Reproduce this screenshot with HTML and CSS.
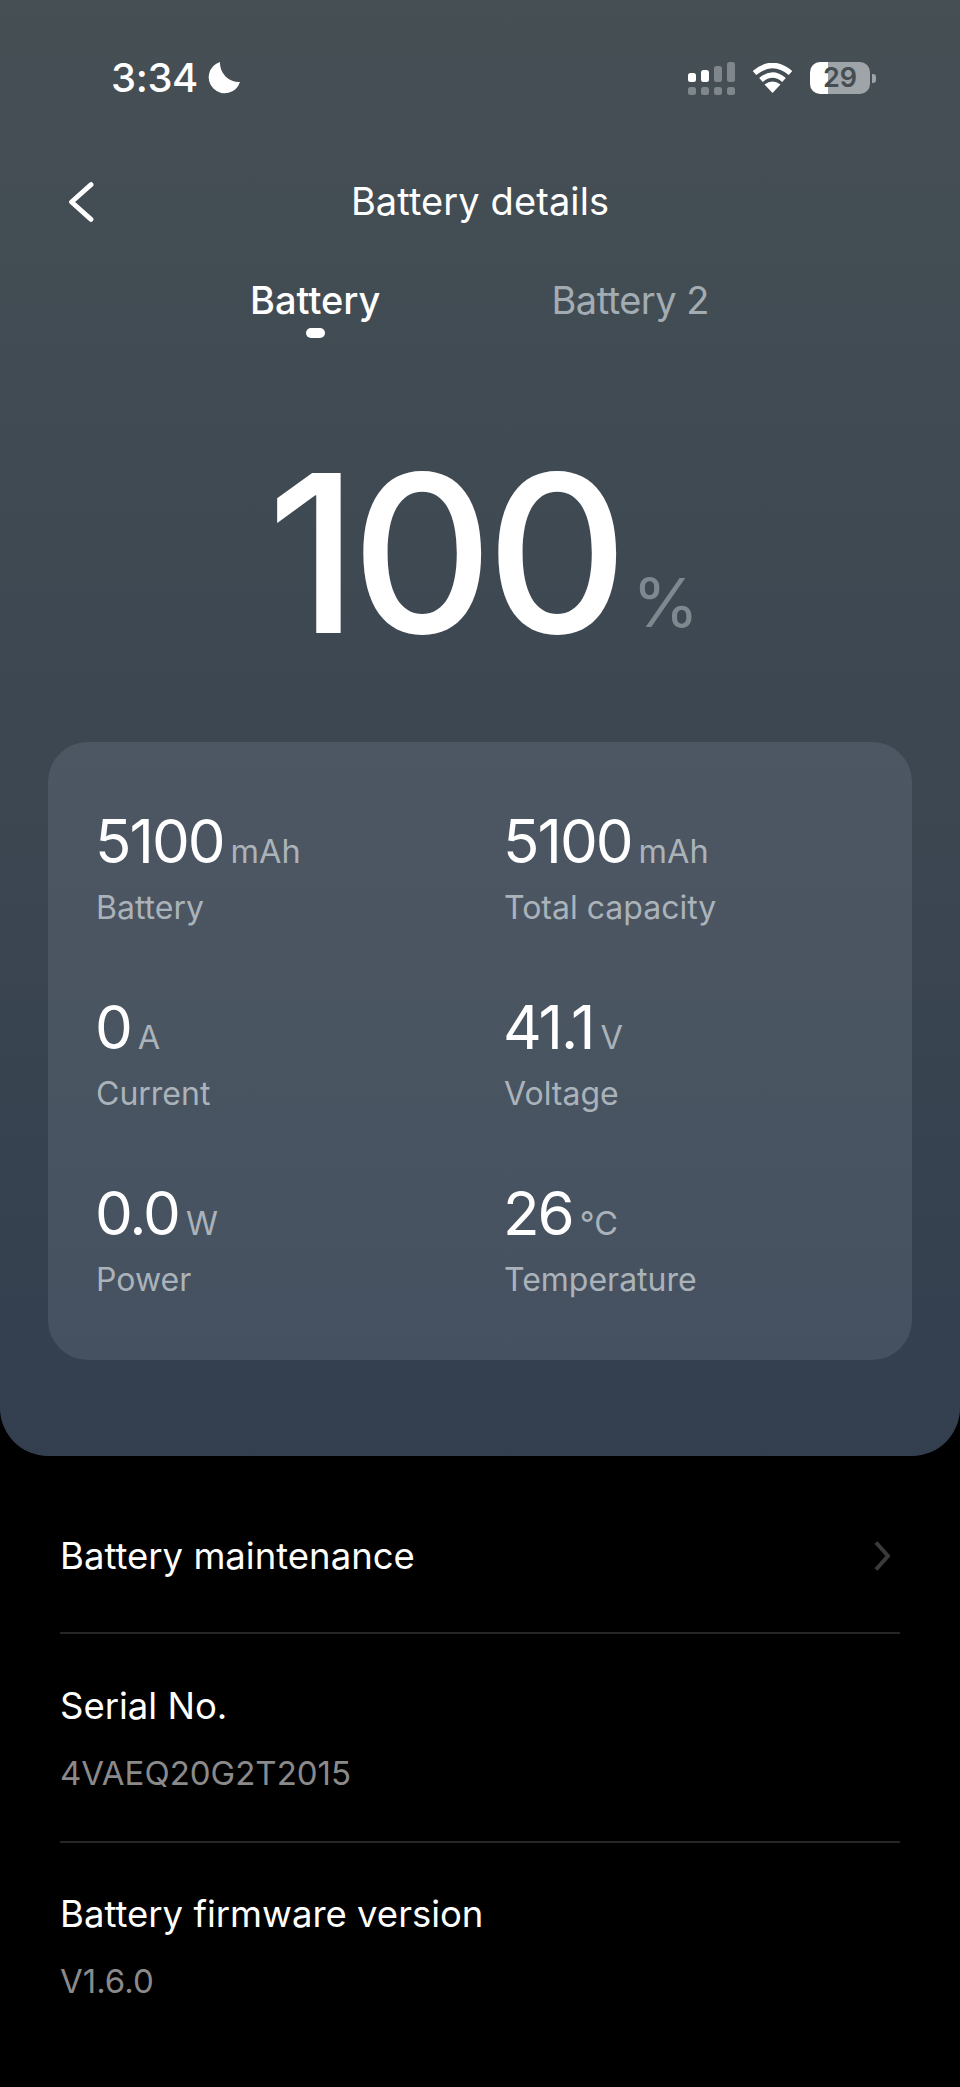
FILE: index.html
```html
<!DOCTYPE html>
<html lang="en">
<head>
  <meta charset="UTF-8">
  <title>Battery details</title>
  <link rel="stylesheet" href="styles.css">
</head>
<body>
  <div class="hero">
    <div class="status">
      <div class="clock">
        <span class="time">3:34</span>
        <svg class="moon" viewBox="0 0 32 32"><path d="M12 0A16 16 0 1 0 32 20A19 19 0 0 1 12 0Z" fill="#fff"/></svg>
      </div>
      <div class="status-icons">
        <div class="signal">
          <div class="signal-col"><i class="bar on h1"></i><i class="dot"></i></div>
          <div class="signal-col"><i class="bar on h2"></i><i class="dot"></i></div>
          <div class="signal-col"><i class="bar h3"></i><i class="dot"></i></div>
          <div class="signal-col"><i class="bar h4"></i><i class="dot"></i></div>
        </div>
        <svg class="wifi" viewBox="0 0 41 30" fill="none" stroke="#fff">
          <path d="M2.5 10Q20.5 -5 38.5 10" stroke-width="5.5"/>
          <path d="M9 17Q20.5 7 32 17" stroke-width="5.5"/>
          <path d="M20.5 30L12.5 21.5Q20.5 15.5 28.5 21.5Z" fill="#fff" stroke="none"/>
        </svg>
        <div class="battery-icon"><span>29</span></div>
        <div class="battery-tip"></div>
      </div>
    </div>

    <div class="nav">
      <svg class="back" viewBox="0 0 24 38" fill="none" stroke="#fff" stroke-width="4.6" stroke-linecap="round" stroke-linejoin="round"><path d="M21.5 2.5L3 19L21.5 35.5"/></svg>
      <div class="title">Battery details</div>
    </div>

    <div class="tabs">
      <div class="tab active">Battery<i class="tab-mark"></i></div>
      <div class="tab">Battery 2</div>
    </div>

    <div class="level">100<span class="pct">%</span></div>

    <div class="card">
      <div class="stat">
        <div class="value">5100<span class="unit">mAh</span></div>
        <div class="label">Battery</div>
      </div>
      <div class="stat">
        <div class="value">5100<span class="unit">mAh</span></div>
        <div class="label">Total capacity</div>
      </div>
      <div class="stat">
        <div class="value">0<span class="unit">A</span></div>
        <div class="label">Current</div>
      </div>
      <div class="stat">
        <div class="value">41.1<span class="unit">V</span></div>
        <div class="label">Voltage</div>
      </div>
      <div class="stat">
        <div class="value">0.0<span class="unit">W</span></div>
        <div class="label">Power</div>
      </div>
      <div class="stat">
        <div class="value">26<span class="unit">°C</span></div>
        <div class="label">Temperature</div>
      </div>
    </div>
  </div>

  <div class="list">
    <div class="row row-link">
      <div class="row-title">Battery maintenance</div>
      <svg class="chevron" viewBox="0 0 16 30" fill="none" stroke="#3a3a3a" stroke-width="4"><path d="M2 1.5L14 15L2 28.5"/></svg>
    </div>
    <div class="row">
      <div class="row-title">Serial No.</div>
      <div class="row-sub">4VAEQ20G2T2015</div>
    </div>
    <div class="row row-last">
      <div class="row-title">Battery firmware version</div>
      <div class="row-sub">V1.6.0</div>
    </div>
  </div>
</body>
</html>
```

FILE: styles.css
```css
* {
  box-sizing: border-box;
}

body {
  margin: 0;
  background: #000;
  color: #fff;
  font-family: Inter, "Liberation Sans", sans-serif;
}

.hero {
  height: 1456px;
  padding-top: 54px;
  background: linear-gradient(180deg, #454f54 0%, #3e4852 45%, #333f4f 100%);
  border-radius: 0 0 48px 48px;
}

.status {
  display: flex;
  justify-content: space-between;
  align-items: center;
  height: 48px;
  padding: 0 84px 0 111px;
}

.clock {
  display: flex;
  align-items: center;
  gap: 10px;
}

.time {
  font-size: 40px;
  line-height: 48px;
  font-weight: 500;
  letter-spacing: -0.4px;
}

.moon {
  width: 32px;
  height: 32px;
}

.status-icons {
  display: flex;
  align-items: center;
}

.signal {
  display: flex;
  align-items: flex-end;
  gap: 5px;
  margin-right: 17px;
}

.signal-col {
  display: flex;
  flex-direction: column;
  gap: 5px;
}

.bar, .dot {
  display: block;
  width: 8px;
  border-radius: 2.5px;
  background: #7f878c;
}

.dot {
  height: 8px;
}

.bar.on {
  background: #fff;
}

.h1 { height: 9px; }
.h2 { height: 12px; }
.h3 { height: 16px; }
.h4 { height: 20px; }

.wifi {
  width: 41px;
  height: 30px;
  margin-right: 17px;
}

.battery-icon {
  width: 60px;
  height: 32px;
  border-radius: 10px;
  background: linear-gradient(90deg, #fff 30%, #9ea4a8 30%);
  color: #434d52;
  font-size: 27px;
  font-weight: 600;
  line-height: 32px;
  text-align: center;
}

.battery-tip {
  width: 4px;
  height: 9px;
  margin-left: 2px;
  border-radius: 0 3px 3px 0;
  background: #9ea4a8;
}

.nav {
  display: flex;
  justify-content: center;
  align-items: center;
  position: relative;
  height: 44px;
  margin-top: 77px;
}

.back {
  position: absolute;
  left: 68px;
  top: 3px;
  width: 26px;
  height: 40px;
}

.title {
  font-size: 38px;
  line-height: 44px;
  letter-spacing: 0.1px;
}

.tabs {
  display: flex;
  gap: 171px;
  margin-top: 57px;
  padding-left: 250px;
}

.tab {
  display: flex;
  flex-direction: column;
  align-items: center;
  font-size: 38px;
  line-height: 40px;
  color: #a3acb2;
  letter-spacing: -0.5px;
}

.tab.active {
  color: #fff;
  font-weight: 500;
  letter-spacing: 0;
}

.tab-mark {
  display: block;
  width: 19px;
  height: 10px;
  margin-top: 8px;
  border-radius: 5px;
  background: #fff;
}

.level {
  height: 200px;
  margin-top: 115px;
  padding-left: 267px;
  font-size: 220px;
  font-weight: 450;
  line-height: 200px;
  letter-spacing: -7px;
  white-space: nowrap;
}

.pct {
  margin-left: 11px;
  font-size: 68px;
  font-weight: 400;
  line-height: 1;
  letter-spacing: 0;
  color: #7e888f;
  vertical-align: 6px;
}

.card {
  display: grid;
  grid-template-columns: 408px 1fr;
  align-content: start;
  row-gap: 69px;
  height: 618px;
  margin: 89px 48px 0;
  padding: 69px 0 0 48px;
  border-radius: 40px;
  background: rgba(225, 240, 255, 0.1);
}

.value {
  height: 60px;
  margin-left: -1px;
  font-size: 60px;
  line-height: 60px;
  letter-spacing: -2px;
}

.unit {
  margin-left: 7px;
  font-size: 32.5px;
  letter-spacing: 0;
  color: #abb3ba;
}

.label {
  margin-top: 17px;
  font-size: 32px;
  line-height: 40px;
  color: #abb3ba;
}

.list {
  padding: 0 60px;
}

.row {
  padding: 50px 0 48px;
  border-bottom: 2px solid #262626;
}

.row-link {
  display: flex;
  justify-content: space-between;
  align-items: center;
  height: 178px;
  padding: 23px 10px 0 0;
}

.row-last {
  padding-top: 49px;
  border-bottom: none;
}

.row-title {
  font-size: 36.5px;
  line-height: 44px;
}

.row-sub {
  margin-top: 25px;
  font-size: 33px;
  line-height: 40px;
  color: #8a8a8a;
}

.chevron {
  width: 16px;
  height: 30px;
}
```
